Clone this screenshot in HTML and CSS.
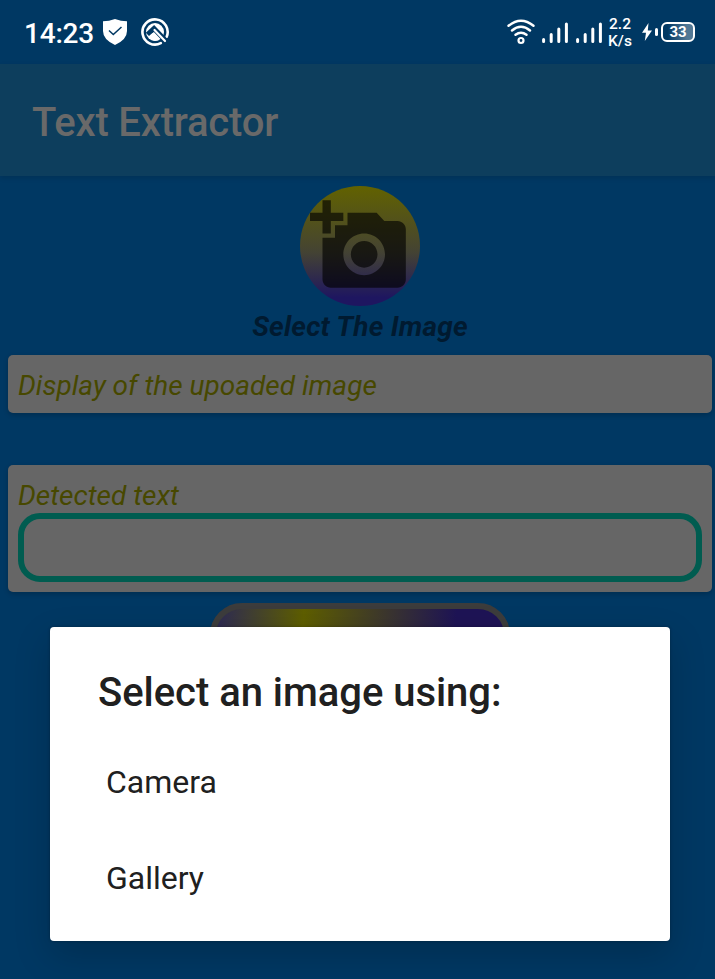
FILE: index.html
```html
<!DOCTYPE html>
<html lang="en">
<head>
<meta charset="utf-8">
<title>Text Extractor</title>
<link rel="stylesheet" href="styles.css">
</head>
<body>
<div class="screen">
  <header class="status">
    <span class="clock">14:23</span>
    <svg class="shield" width="26" height="28" viewBox="0 0 26 28"><path d="M13 1 Q19 3.2 25 3.2 V13 Q25 21.500 13 27 Q1 21.500 1 13 V3.200 Q7 3.200 13 1Z" fill="#fff"/><path d="M7 12.500 11.300 16.500 19.500 9" fill="none" stroke="#003863" stroke-width="1.500"/></svg>
    <svg class="compass" width="30" height="30" viewBox="0 0 30 30"><path d="M20.800 26.200 A12.600 12.600 0 1 1 26.600 20" fill="none" stroke="#fff" stroke-width="2.600" stroke-linecap="round"/><circle cx="15" cy="15" r="9" fill="#fff"/><path d="M7.500 17.500 14 11.500 25.500 23.500" fill="none" stroke="#003863" stroke-width="5"/><path d="M14.500 13 25 24" fill="none" stroke="#fff" stroke-width="2.200" stroke-linecap="round"/><path d="M8.500 19.500 12.500 16 19.500 22.700 Q13 26 8.500 19.500Z" fill="#fff"/></svg>
    <div class="spacer"></div>
    <svg class="wifi" width="28" height="26" viewBox="0 0 28 26" fill="none" stroke="#fff" stroke-width="2.400" stroke-linecap="round"><path d="M1.500 6.800 Q14 -3.500 26.500 6.800M5 11.500 Q14 4 23 11.500M8.500 15.800 Q14 11.500 19.500 15.800"/><circle cx="14" cy="21.500" r="2.500" stroke-width="2.200"/></svg>
    <svg class="signal" width="26" height="22" viewBox="0 0 26 22" stroke="#fff" stroke-width="3" stroke-linecap="round"><path d="M1.600 17.500V19.500M9.200 12.500V19.500M16.800 7V19.500M24.400 2V19.500"/></svg>
    <svg class="signal" width="26" height="22" viewBox="0 0 26 22" stroke="#fff" stroke-width="3" stroke-linecap="round"><path d="M1.600 17.500V19.500M9.200 12.500V19.500M16.800 7V19.500M24.400 2V19.500"/></svg>
    <span class="speed"><span>2.2</span><span>K/s</span></span>
    <svg class="bolt" width="10" height="18" viewBox="0 0 10 18"><path d="M6.500 0 0 9.800H4L2.800 18 10 7.500H5.800Z" fill="#fff"/></svg>
    <span class="nub"></span>
    <span class="battery">33</span>
  </header>
  <div class="appbar">Text Extractor</div>
  <main class="content">
    <div class="photo"><svg width="100" height="100" viewBox="0 0 24 24"><path fill="#000" fill-opacity=".63" d="M3 4V1h2v3h3v2H5v3H3V6H0V4h3zm3 6V7h3V4h7l1.830 2H21c1.100 0 2 .9 2 2v12c0 1.100-.9 2-2 2H5c-1.100 0-2-.9-2-2V10h3zm7 9c2.760 0 5-2.240 5-5s-2.240-5-5-5-5 2.240-5 5 2.240 5 5 5zm-3.200-5c0 1.770 1.430 3.200 3.200 3.200s3.200-1.430 3.200-3.200-1.430-3.200-3.200-3.200-3.200 1.430-3.200 3.200z"/></svg></div>
    <div class="caption">Select The Image</div>
    <section class="card preview">Display of the upoaded image</section>
    <section class="card detected">Detected text<div class="field"></div></section>
    <div class="action"></div>
  </main>
  <div class="dialog">
    <h1>Select an image using:</h1>
    <div class="option">Camera</div>
    <div class="option">Gallery</div>
  </div>
</div>
</body>
</html>
```
FILE: styles.css
```css
* { box-sizing: border-box; }
body { margin: 0; font-family: Roboto, "Liberation Sans", sans-serif; }
.screen { position: relative; width: 715px; height: 979px; overflow: hidden; background: #003863; }
.status { height: 64px; display: flex; align-items: center; padding: 0 20px 0 24px; color: #fff; }
.clock { font-size: 28px; font-weight: 500; line-height: 32px; width: 78px; margin-top: 3px; letter-spacing: -.2px; white-space: nowrap; }
.shield { margin-top: -1px; }
.compass { margin-left: 12px; }
.spacer { flex: 1; }
.wifi { margin-right: 7px; }
.signal { margin: 2px 8px 0 0; }
.signal + .speed { margin-left: -2px; }
.speed { display: flex; flex-direction: column; align-items: center; gap: 1px; width: 24px; margin-right: 10px; font-size: 15.5px; font-weight: 500; line-height: 16px; }
.speed span { height: 16px; line-height: 16px; }
.bolt { margin-right: 3px; }
.nub { width: 3px; height: 8px; border-radius: 2px; background: #fff; margin-right: 3px; }
.battery { width: 34px; height: 20px; border: 2px solid #fff; border-radius: 6px; background: linear-gradient(90deg, #003863 15%, #527895 80%); font-size: 15px; font-weight: 700; line-height: 17px; text-align: center; }
.appbar { height: 112px; padding: 37px 32px 0; background: #0d3e5d; color: #696969; font-size: 40px; font-weight: 500; line-height: 44px; letter-spacing: -.2px; box-shadow: 0 2px 5px rgba(0, 0, 0, .12); }
.content { display: flex; flex-direction: column; padding: 10px 3px 0 8px; }
.photo { width: 120px; height: 120px; padding: 10px; border-radius: 50%; align-self: center; background: linear-gradient(#626200, #444333 55%, #1e1660 93%); }
.photo svg { display: block; }
.caption { height: 49px; padding-top: 4px; text-align: center; font-size: 28px; font-weight: 700; font-style: italic; line-height: 34px; letter-spacing: .2px; color: #001a30; }
.card { background: #666; border-radius: 5px; padding: 14px 10px 0; font-size: 28px; font-style: italic; line-height: 34px; color: #474800; box-shadow: 0 2px 5px rgba(0, 0, 0, .2); }
.preview { height: 58px; margin-bottom: 52px; }
.detected { height: 127px; margin-bottom: 11px; }
.field { height: 69px; border: 6px solid #005c50; border-radius: 22px; }
.action { width: 300px; height: 80px; align-self: center; border: 6px solid #3c3c3c; border-radius: 32px; background: linear-gradient(95deg, #2c2955 0, #5e5e00 30%, #1e1455 82%); }
.dialog { position: absolute; left: 50px; top: 627px; width: 620px; height: 314px; padding: 44px 48px 0; background: #fff; border-radius: 4px; color: #202020; box-shadow: 0 14px 36px rgba(0, 0, 0, .18), 0 0 3px rgba(0, 0, 0, .3); }
.dialog h1 { margin: 0; height: 63px; font-size: 40px; font-weight: 500; line-height: 44px; letter-spacing: -.04px; }
.option { height: 96px; padding-left: 8px; font-size: 32px; line-height: 96px; }
```
